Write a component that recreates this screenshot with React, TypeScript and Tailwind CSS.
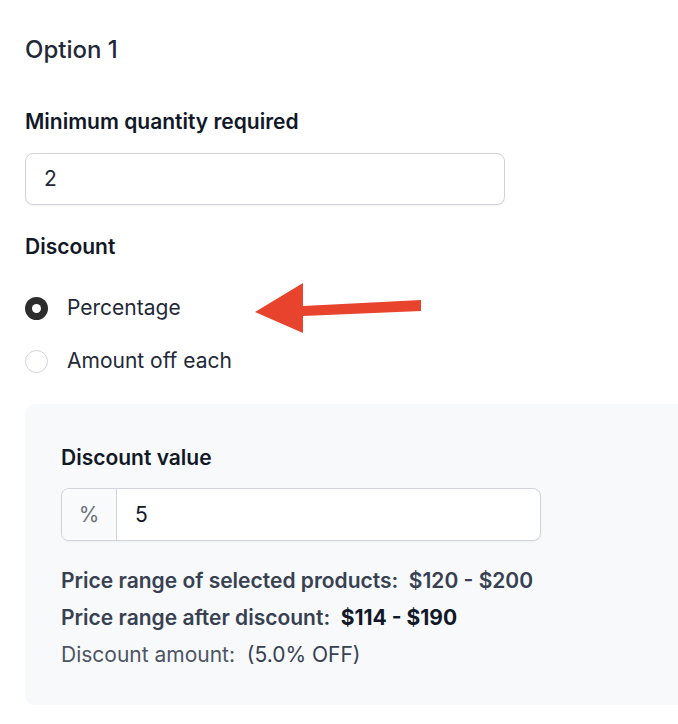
import React from "react";

const Arrow = () => (
  <svg width="170" height="52" viewBox="0 0 170 52" className="absolute left-[253px] top-[282px]">
    <polygon points="2,30 50,1 50,24 168,18 168,29 50,34 50,51" fill="#e8432d" />
  </svg>
);

export default function App() {
  return (
    <div className="relative min-h-screen bg-white pl-[25px] pt-[35px] font-['Inter',sans-serif] text-[#1f2937]">
      <h2 className="text-[24px] leading-[30px] font-medium text-[#1f2937]">Option 1</h2>

      <label className="mt-[44px] block text-[21px] font-semibold leading-[26px] text-[#111827]">
        Minimum quantity required
      </label>
      <div className="mt-[18px] flex h-[52px] w-[480px] items-center rounded-[8px] border border-[#d1d5db] bg-white px-[18px] text-[21px] shadow-[0_1px_2px_rgba(0,0,0,0.05)]">
        2
      </div>

      <div className="mt-[29px] text-[21px] font-semibold leading-[26px] text-[#111827]">Discount</div>

      <div className="mt-[35px] flex flex-col gap-[27px]">
        <div className="flex items-center gap-[19px]">
          <span className="flex h-[23px] w-[23px] items-center justify-center rounded-full bg-[#2d2d2d]">
            <span className="h-[9px] w-[9px] rounded-full bg-white" />
          </span>
          <span className="text-[21px] leading-[26px] text-[#1f2937]">Percentage</span>
        </div>
        <div className="flex items-center gap-[19px]">
          <span className="h-[23px] w-[23px] rounded-full border border-[#d1d5db] bg-white" />
          <span className="text-[21px] leading-[26px] text-[#1f2937]">Amount off each</span>
        </div>
      </div>

      <Arrow />

      <div className="mt-[30px] rounded-l-[10px] bg-[#f8f9fb] pb-[37px] pl-[36px] pt-[41px]">
        <div className="text-[21px] font-semibold leading-[26px] text-[#111827]">Discount value</div>
        <div className="mt-[17px] flex h-[53px] w-[480px] overflow-hidden rounded-[8px] border border-[#d1d5db] bg-white shadow-[0_1px_2px_rgba(0,0,0,0.05)]">
          <div className="flex w-[55px] items-center justify-center border-r border-[#d1d5db] bg-[#f9fafb] text-[21px] text-[#6b7280]">
            %
          </div>
          <div className="flex items-center px-[18px] text-[21px] text-[#111827]">5</div>
        </div>
        <div className="mt-[27px] flex flex-col gap-[11px] text-[21px] leading-[26px]">
          <div className="font-semibold text-[#374151]">
            Price range of selected products:&nbsp; <span className="text-[#374151]">$120 - $200</span>
          </div>
          <div className="font-semibold text-[#374151]">
            Price range after discount:&nbsp; <span className="font-bold text-[#111827]">$114 - $190</span>
          </div>
          <div className="text-[#4b5563]">
            Discount amount:&nbsp; <span className="text-[#374151]">(5.0% OFF)</span>
          </div>
        </div>
      </div>
    </div>
  );
}
